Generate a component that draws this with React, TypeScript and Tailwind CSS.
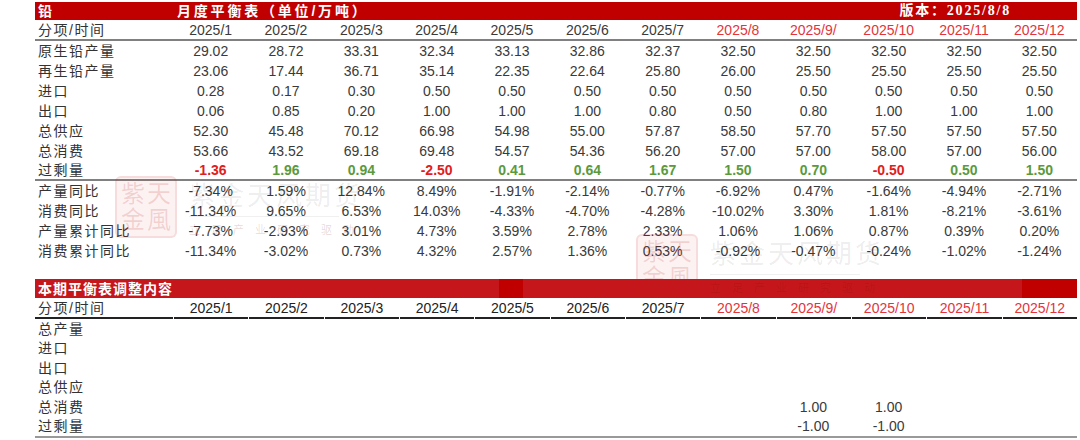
import React from "react";

const months = [
  "2025/1",
  "2025/2",
  "2025/3",
  "2025/4",
  "2025/5",
  "2025/6",
  "2025/7",
  "2025/8",
  "2025/9/",
  "2025/10",
  "2025/11",
  "2025/12",
];

const supplyRows: { label: string; values: string[] }[] = [
  { label: "原生铅产量", values: ["29.02", "28.72", "33.31", "32.34", "33.13", "32.86", "32.37", "32.50", "32.50", "32.50", "32.50", "32.50"] },
  { label: "再生铅产量", values: ["23.06", "17.44", "36.71", "35.14", "22.35", "22.64", "25.80", "26.00", "25.50", "25.50", "25.50", "25.50"] },
  { label: "进口", values: ["0.28", "0.17", "0.30", "0.50", "0.50", "0.50", "0.50", "0.50", "0.50", "0.50", "0.50", "0.50"] },
  { label: "出口", values: ["0.06", "0.85", "0.20", "1.00", "1.00", "1.00", "0.80", "0.50", "0.80", "1.00", "1.00", "1.00"] },
  { label: "总供应", values: ["52.30", "45.48", "70.12", "66.98", "54.98", "55.00", "57.87", "58.50", "57.70", "57.50", "57.50", "57.50"] },
  { label: "总消费", values: ["53.66", "43.52", "69.18", "69.48", "54.57", "54.36", "56.20", "57.00", "57.00", "58.00", "57.00", "56.00"] },
];

const surplus = ["-1.36", "1.96", "0.94", "-2.50", "0.41", "0.64", "1.67", "1.50", "0.70", "-0.50", "0.50", "1.50"];

const ratioRows: { label: string; values: string[] }[] = [
  { label: "产量同比", values: ["-7.34%", "1.59%", "12.84%", "8.49%", "-1.91%", "-2.14%", "-0.77%", "-6.92%", "0.47%", "-1.64%", "-4.94%", "-2.71%"] },
  { label: "消费同比", values: ["-11.34%", "9.65%", "6.53%", "14.03%", "-4.33%", "-4.70%", "-4.28%", "-10.02%", "3.30%", "1.81%", "-8.21%", "-3.61%"] },
  { label: "产量累计同比", values: ["-7.73%", "-2.93%", "3.01%", "4.73%", "3.59%", "2.78%", "2.33%", "1.06%", "1.06%", "0.87%", "0.39%", "0.20%"] },
  { label: "消费累计同比", values: ["-11.34%", "-3.02%", "0.73%", "4.32%", "2.57%", "1.36%", "0.53%", "-0.92%", "-0.47%", "-0.24%", "-1.02%", "-1.24%"] },
];

const adjustRows: { label: string; values: Record<number, string> }[] = [
  { label: "总产量", values: {} },
  { label: "进口", values: {} },
  { label: "出口", values: {} },
  { label: "总供应", values: {} },
  { label: "总消费", values: { 8: "1.00", 9: "1.00" } },
  { label: "过剩量", values: { 8: "-1.00", 9: "-1.00" } },
];

const grid = "grid grid-cols-[138px_repeat(12,minmax(0,1fr))]";

function Label({ text }: { text: string }) {
  return <div className="pl-[3px] text-[14px] tracking-[1.5px] text-[#333]">{text}</div>;
}

function Num({ text, className = "" }: { text: string; className?: string }) {
  return <div className={"text-center text-[14px] text-[#3a3a3a] " + className}>{text}</div>;
}

// 水印：印章 + 公司名
function Watermark({ className }: { className: string }) {
  return (
    <div className={"pointer-events-none absolute flex items-start gap-[12px] " + className}>
      <div className="grid h-[62px] w-[62px] grid-cols-2 place-items-center rounded-[6px] border-2 border-[rgba(200,30,30,0.1)] bg-[rgba(200,30,30,0.06)] p-[3px] font-['Liberation_Serif','Noto_Sans_CJK_SC',serif] text-[24px] leading-none text-[rgba(190,30,30,0.16)]">
        <span>紫</span>
        <span>天</span>
        <span>金</span>
        <span>風</span>
      </div>
      <div className="flex flex-col pt-[6px]">
        <div className="text-[26px] leading-[28px] tracking-[3px] text-[rgba(0,0,0,0.08)]">紫金天风期货</div>
        <div className="mt-[6px] h-px w-[150px] bg-[rgba(0,0,0,0.06)]" />
        <div className="mt-[8px] text-[11px] leading-none tracking-[11px] text-[rgba(120,0,0,0.16)]">立足产业研究驱动</div>
      </div>
    </div>
  );
}

export default function App() {
  return (
    <div className="relative h-[440px] w-[1080px] overflow-hidden bg-white font-['Liberation_Sans','Noto_Sans_CJK_SC',sans-serif] leading-none">
      {/* 月度平衡表 */}
      <div className="ml-[35px] mt-[2px] w-[1042px]">
        <div className="flex h-[18px] items-center bg-[#c00000] font-bold text-white">
          <div className="w-[138px] pl-[3px] text-[14px]">铅</div>
          <div className="pl-[4px] text-[14px] tracking-[2.8px]">月度平衡表（单位/万吨）</div>
          <div className="ml-auto mr-[66px] font-['Liberation_Serif','Noto_Sans_CJK_SC',serif] text-[14px] tracking-[1.8px]">
            版本：2025/8/8
          </div>
        </div>

        <div className={grid + " h-[21px] items-center border-b-2 border-[#808080]"}>
          <Label text="分项/时间" />
          {months.map((m, i) => (
            <Num key={m} text={m} className={i >= 7 ? "text-[#e3343a]" : ""} />
          ))}
        </div>

        {supplyRows.map((row) => (
          <div key={row.label} className={grid + " h-[20px] items-center"}>
            <Label text={row.label} />
            {row.values.map((v, i) => (
              <Num key={i} text={v} />
            ))}
          </div>
        ))}

        <div className={grid + " h-[20px] items-center border-b-2 border-[#808080]"}>
          <Label text="过剩量" />
          {surplus.map((v, i) => (
            <Num
              key={i}
              text={v}
              className={"font-bold " + (v.startsWith("-") ? "text-[#e02020]" : "text-[#5b9a3c]")}
            />
          ))}
        </div>

        {ratioRows.map((row) => (
          <div key={row.label} className={grid + " h-[20px] items-center"}>
            <Label text={row.label} />
            {row.values.map((v, i) => (
              <Num key={i} text={v} />
            ))}
          </div>
        ))}
      </div>

      {/* 本期平衡表调整内容 */}
      <div className="ml-[35px] mt-[18px] w-[1042px]">
        <div className="flex h-[19px] items-stretch">
          <div className="flex w-[464px] items-center bg-[#c5171b] pl-[3px] text-[14px] font-bold tracking-[1px] text-white">
            本期平衡表调整内容
          </div>
          <div className="w-[24px] bg-[#c00000]" />
          <div className="flex-1 bg-[#c5171b]" />
          <div className="w-[55px] bg-[#c00000]" />
        </div>

        <div className={grid + " h-[21px] items-center gap-x-px"}>
          <div className="flex h-full items-center border-b-2 border-[#222]">
            <Label text="分项/时间" />
          </div>
          {months.map((m, i) => (
            <div key={m} className="flex h-full items-center justify-center border-b-2 border-[#222]">
              <Num text={m} className={i >= 7 ? "text-[#e3343a]" : "text-[#222]"} />
            </div>
          ))}
        </div>

        <div className="border-b-2 border-[#999]">
          {adjustRows.map((row) => (
            <div key={row.label} className={grid + " h-[19.5px] items-center"}>
              <Label text={row.label} />
              {months.map((_, i) => (
                <Num key={i} text={row.values[i] ?? ""} />
              ))}
            </div>
          ))}
        </div>
      </div>

      <Watermark className="left-[115px] top-[176px]" />
      <Watermark className="left-[636px] top-[234px]" />
    </div>
  );
}
